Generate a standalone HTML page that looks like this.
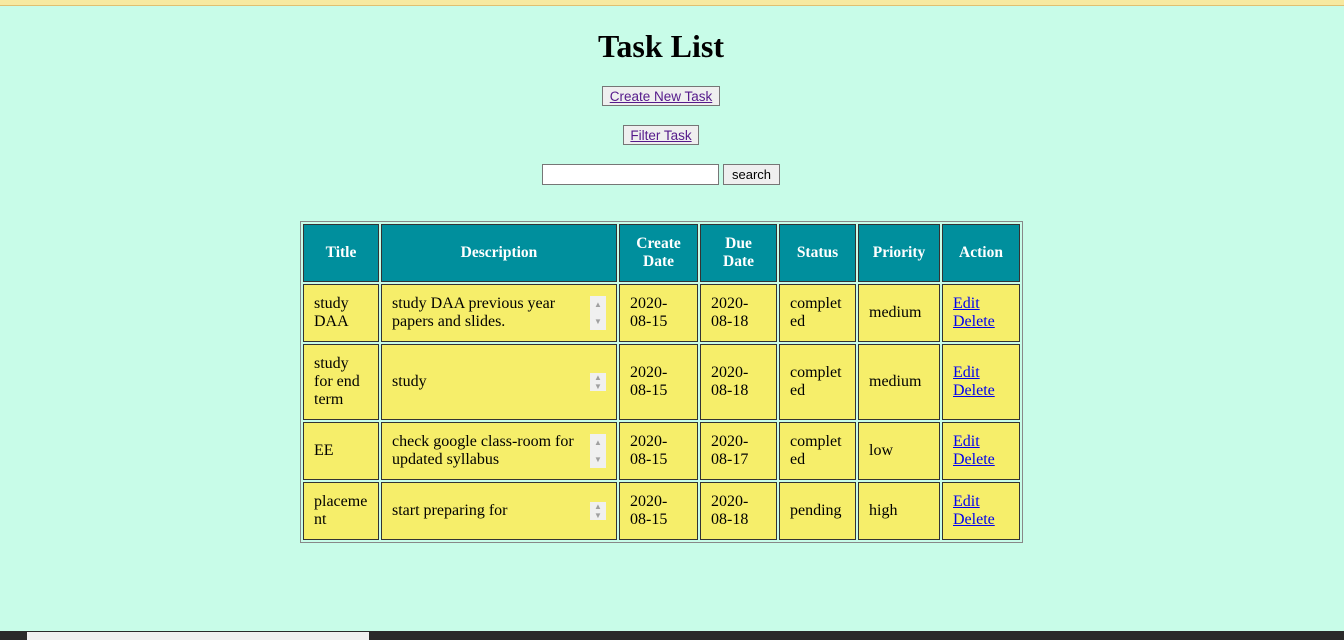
<!DOCTYPE html>
<html><head><style>
body{margin:0;background:#c8fce8;font-family:"Liberation Serif",serif;width:1344px;height:640px;overflow:hidden;position:relative}
.top{height:5px;background:#f7e9a0;border-bottom:1px solid #e0c070}
h1{position:absolute;top:28px;left:0;width:1322px;text-align:center;margin:0;font-size:32px;font-weight:bold}
.btn{position:absolute;font:13.5px "Liberation Sans",sans-serif;background:#efefef;border:1px solid #767676;color:#551a8b;text-decoration:underline;padding:1px 0;text-align:center;box-sizing:border-box;height:20px;line-height:17px}
input{position:absolute;left:542px;top:164px;width:177px;height:21px;box-sizing:border-box;border:1px solid #767676;background:#fff}
.s{position:absolute;left:723px;top:164px;width:57px;height:21px;box-sizing:border-box;border:1px solid #767676;background:#efefef;font:13px "Liberation Sans",sans-serif;text-align:center;line-height:20px}
table{position:absolute;left:300px;top:221px;border:1px solid #888;border-collapse:separate;border-spacing:2px;font-size:16px}
td,th{border:1px solid #333;padding:0 10px;box-sizing:border-box;text-align:left;line-height:18px}
th{background:#008f9d;color:#fff;text-align:center;height:58px;font-size:15.5px}
td{background:#f6ee6a;color:#000}
a{color:#0000ee}
.d{position:relative}
.sb{position:absolute;right:10px;top:50%;margin-top:-17px;width:16px;height:34px;background:#f0f0f0;color:#a0a0a0;font-size:8px;text-align:center;line-height:17px}
.sb.one{height:18px;margin-top:-9px;line-height:9px}
.task{position:absolute;left:0;top:631px;width:1344px;height:9px;background:#2a2a2a}
.task i{position:absolute;left:27px;top:1px;width:342px;height:8px;background:#f0f0f0}
</style></head><body>
<div class="top"></div>
<h1>Task List</h1>
<div class="btn" style="left:602px;top:86px;width:118px">Create New Task</div>
<div class="btn" style="left:623px;top:125px;width:76px">Filter Task</div>
<input><div class="s">search</div>
<table>
<tr><th style="width:76px">Title</th><th style="width:236px">Description</th><th style="width:79px">Create Date</th><th style="width:77px">Due Date</th><th style="width:77px">Status</th><th style="width:82px">Priority</th><th style="width:78px">Action</th></tr>
<tr style="height:58px"><td>study DAA</td><td class="d">study DAA previous year<br>papers and slides.<div class="sb">▲<br>▼</div></td><td>2020-<br>08-15</td><td>2020-<br>08-18</td><td>complet<br>ed</td><td>medium</td><td><a href="#">Edit</a><br><a href="#">Delete</a></td></tr>
<tr style="height:76px"><td>study<br>for end<br>term</td><td class="d">study<div class="sb one">▲<br>▼</div></td><td>2020-<br>08-15</td><td>2020-<br>08-18</td><td>complet<br>ed</td><td>medium</td><td><a href="#">Edit</a><br><a href="#">Delete</a></td></tr>
<tr style="height:58px"><td>EE</td><td class="d">check google class-room for<br>updated syllabus<div class="sb">▲<br>▼</div></td><td>2020-<br>08-15</td><td>2020-<br>08-17</td><td>complet<br>ed</td><td>low</td><td><a href="#">Edit</a><br><a href="#">Delete</a></td></tr>
<tr style="height:58px"><td>placeme<br>nt</td><td class="d">start preparing for<div class="sb one">▲<br>▼</div></td><td>2020-<br>08-15</td><td>2020-<br>08-18</td><td>pending</td><td>high</td><td><a href="#">Edit</a><br><a href="#">Delete</a></td></tr>
</table>
<div class="task"><i></i></div>
</body></html>
